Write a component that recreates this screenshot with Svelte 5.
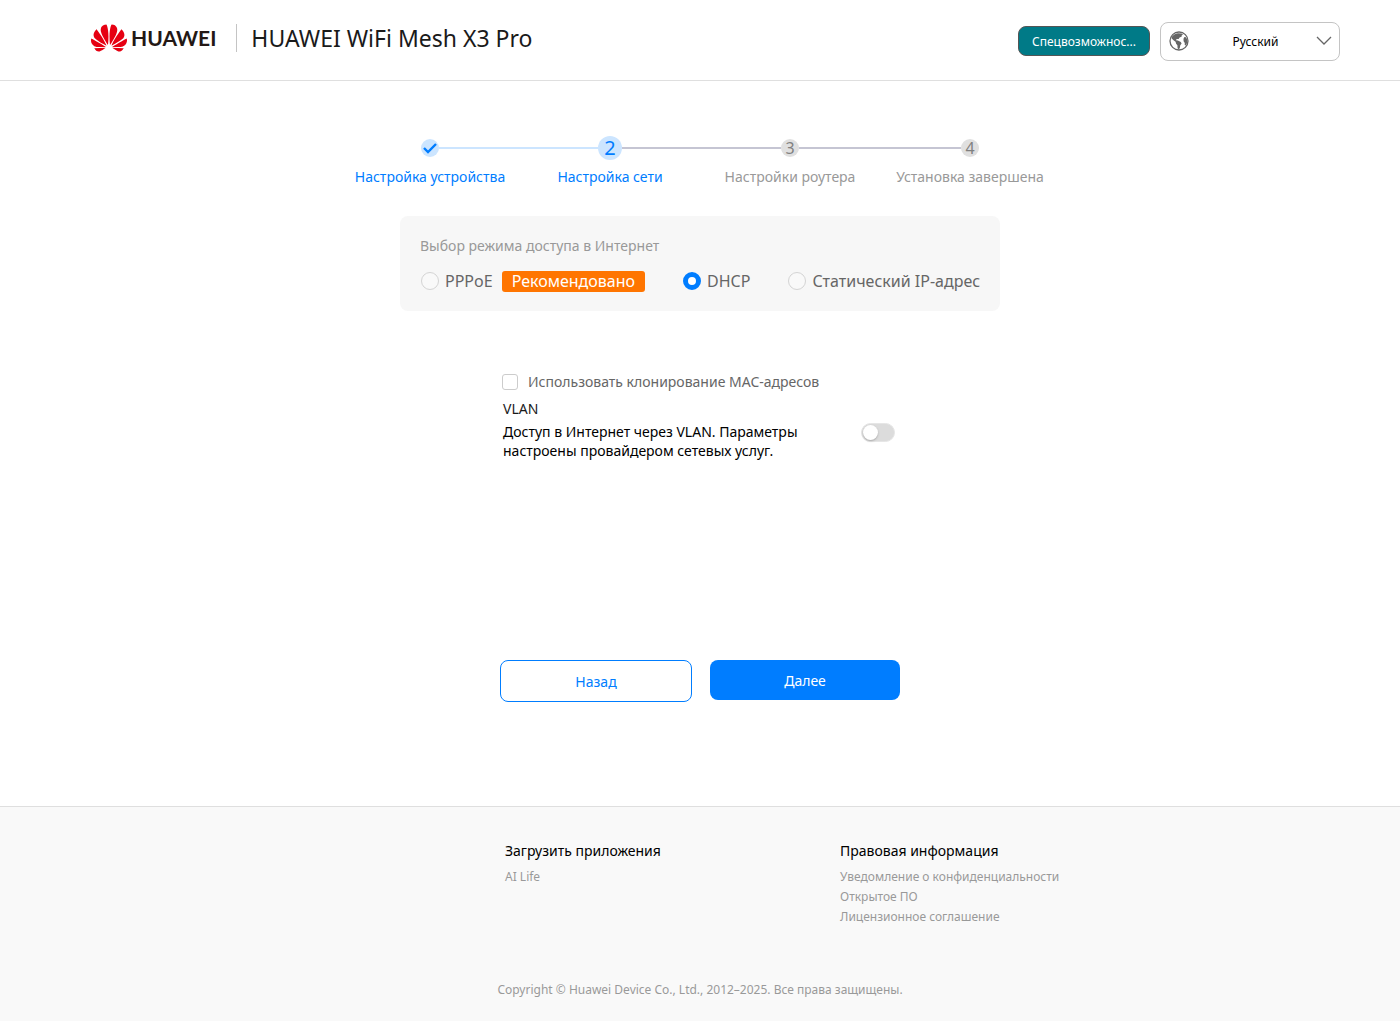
<script>
	let mode = 'dhcp';
	let cloneMac = false;
	let vlan = false;
	let language = 'ru';

	const currentStep = 2;

	const steps = ['Настройка устройства', 'Настройка сети', 'Настройки роутера', 'Установка завершена'];

	const modes = [
		{ id: 'pppoe', title: 'PPPoE', badge: 'Рекомендовано' },
		{ id: 'dhcp', title: 'DHCP' },
		{ id: 'static', title: 'Статический IP-адрес' }
	];

	const footerColumns = [
		{ title: 'Загрузить приложения', links: ['AI Life'] },
		{
			title: 'Правовая информация',
			links: ['Уведомление о конфиденциальности', 'Открытое ПО', 'Лицензионное соглашение']
		}
	];
</script>

<div class="page">
	<header class="header">
		<div class="identity">
			<a class="brand" href="/">
				<svg class="brand-icon" viewBox="0 2.9 24 18.2" aria-hidden="true">
					<path
						d="M3.67 6.14S1.82 7.91 1.72 9.78v.35c.08 1.51 1.22 2.4 1.22 2.4 1.83 1.79 6.26 4.04 7.3 4.55 0 0 .06.03.1-.01l.02-.04v-.04C7.52 10.8 3.67 6.14 3.67 6.14zM9.65 18.6c-.02-.08-.1-.08-.1-.08l-7.38.26c.8 1.43 2.15 2.53 3.56 2.2.96-.25 3.16-1.78 3.88-2.3.06-.05.04-.09.04-.09zm.08-.78C6.49 15.63.21 12.28.21 12.28c-.15.46-.2.9-.21 1.3v.07c0 1.07.4 1.82.4 1.82.8 1.69 2.34 2.2 2.34 2.2.7.3 1.4.31 1.4.31.12.02 4.4 0 5.54 0 .05 0 .08-.05.08-.05v-.06c0-.03-.03-.05-.03-.05zM9.06 3.19a3.42 3.42 0 0 0-2.57 3.15v.41c.03.6.16 1.05.16 1.05.66 2.9 3.86 7.65 4.55 8.65.05.05.1.03.1.03a.1.1 0 0 0 .06-.1c1.06-10.6-1.11-13.42-1.11-13.42-.32.02-1.19.23-1.19.23zm8.3 2.27s-.49-1.8-2.44-2.28c0 0-.57-.14-1.17-.22 0 0-2.18 2.81-1.12 13.43.01.07.06.08.06.08.07.03.1-.03.1-.03.72-1.03 3.9-5.76 4.55-8.64 0 0 .36-1.4.02-2.34zm-2.92 13.07s-.07 0-.09.05c0 0-.01.07.03.1.7.51 2.85 2 3.88 2.3 0 0 .16.05.43.06h.14c.69-.02 1.9-.37 3-2.26l-7.4-.25zm7.83-8.41c.14-2.06-1.94-3.97-1.94-3.98 0 0-3.85 4.66-6.67 10.8 0 0-.03.08.02.13l.04.01h.06c1.06-.53 5.46-2.77 7.28-4.54 0 0 1.15-.93 1.21-2.42zm1.52 2.14s-6.28 3.37-9.52 5.55c0 0-.05.04-.03.11 0 0 .03.06.07.06 1.16 0 5.56 0 5.67-.02 0 0 .57-.02 1.27-.29 0 0 1.56-.5 2.37-2.27 0 0 .73-1.45.17-3.14z"
					/>
				</svg>
				<span class="brand-name">HUAWEI</span>
			</a>
			<h1 class="product">HUAWEI WiFi Mesh X3 Pro</h1>
		</div>

		<button class="accessibility" type="button">Спецвозможнос...</button>

		<div class="language">
			<svg class="globe" viewBox="0 0 20 20" aria-hidden="true">
				<circle cx="10" cy="10" r="9" fill="none" stroke="#666" stroke-width="1.3" />
				<path
					d="M2.2 7C3.4 4.2 6 2.6 9 2.2l3.6.3 1.4 1.1-1.4.8.2 1.2-2.2.9-1 1.6-2-.1-.6 1.2 1.8.2 3 1.5.8 1.5-1.3 1.9-.5 2.6-1 1.6-1.2-1.2-.2-3-1.3-1.6-.5-2-1.8-1.3z"
				/>
				<path d="M15.4 6l1.6.2 1 1.8.4 2-.5 2.6-1.3 2-.9-.8.1-1.8-1.2-1.8-.1-2.4z" />
			</svg>
			<select class="language-select" aria-label="Язык" bind:value={language}>
				<option value="ru">Русский</option>
				<option value="en">English</option>
			</select>
			<svg class="chevron" viewBox="0 0 16 10" aria-hidden="true">
				<path d="M1 1l7 7 7-7" />
			</svg>
		</div>
	</header>

	<main class="main">
		<ol class="steps">
			{#each steps as step, i}
				<li
					class="step"
					class:done={i + 1 < currentStep}
					class:current={i + 1 === currentStep}
				>
					<div class="step-track">
						<span class="step-dot">
							{#if i + 1 < currentStep}
								<svg class="check" viewBox="0 0 14 12" aria-hidden="true">
									<path d="M1 6l4 4 8-8" />
								</svg>
							{:else}
								{i + 1}
							{/if}
						</span>
					</div>
					<span class="step-title">{step}</span>
				</li>
			{/each}
		</ol>

		<fieldset class="modes">
			<legend class="modes-title">Выбор режима доступа в Интернет</legend>
			<div class="modes-row">
				{#each modes as item}
					<label class="mode">
						<input class="radio" type="radio" name="mode" value={item.id} bind:group={mode} />
						<span>{item.title}</span>
						{#if item.badge}
							<span class="badge">{item.badge}</span>
						{/if}
					</label>
				{/each}
			</div>
		</fieldset>

		<form class="form" on:submit|preventDefault>
			<div class="options">
				<label class="clone">
					<input class="checkbox" type="checkbox" bind:checked={cloneMac} />
					<span>Использовать клонирование MAC-адресов</span>
				</label>
				<label class="vlan">
					<span class="vlan-text">
						<span class="vlan-title">VLAN</span>
						<span>Доступ в Интернет через VLAN. Параметры настроены провайдером сетевых услуг.</span>
					</span>
					<input class="switch" type="checkbox" role="switch" bind:checked={vlan} />
				</label>
			</div>

			<div class="actions">
				<button class="button back" type="button">Назад</button>
				<button class="button next" type="submit">Далее</button>
			</div>
		</form>
	</main>

	<footer class="footer">
		<div class="footer-columns">
			{#each footerColumns as column}
				<section>
					<h2 class="footer-title">{column.title}</h2>
					{#each column.links as link}
						<a class="footer-link" href="/">{link}</a>
					{/each}
				</section>
			{/each}
		</div>
		<p class="copyright">Copyright © Huawei Device Co., Ltd., 2012–2025. Все права защищены.</p>
	</footer>
</div>

<style>
	:global(body) {
		margin: 0;
		background: #fff;
	}

	.page {
		display: flex;
		flex-direction: column;
		min-height: 100vh;
		font-family: 'Segoe UI', 'Noto Sans', 'Open Sans', sans-serif;
		font-size: 14px;
		line-height: 20px;
		color: #000;
	}

	.page * {
		box-sizing: border-box;
	}

	button,
	select {
		font-family: inherit;
		cursor: pointer;
	}

	/* Header */

	.header {
		display: flex;
		align-items: center;
		height: 81px;
		padding: 2px 60px 0 91px;
		border-bottom: 1px solid #dfdfdf;
	}

	.identity {
		display: flex;
		align-items: center;
		margin-right: auto;
		padding-bottom: 6px;
	}

	.brand {
		display: flex;
		align-items: center;
		gap: 4px;
		padding-right: 20px;
		border-right: 1px solid #c4c4c4;
		color: #231815;
		text-decoration: none;
	}

	.brand-icon {
		width: 36px;
		height: 28px;
		fill: #e60012;
	}

	.brand-name {
		font-family: Lato, sans-serif;
		font-size: 21px;
		font-weight: 700;
		line-height: 28px;
	}

	.product {
		margin: 0 0 0 14px;
		font-size: 23px;
		font-weight: 400;
		line-height: 32px;
		color: #1a1a1a;
	}

	.accessibility {
		width: 132px;
		height: 30px;
		margin-right: 10px;
		padding: 0 10px;
		border: 1px solid #555;
		border-radius: 8px;
		background: #007a87;
		color: #fff;
		font-size: 12px;
	}

	.language {
		display: flex;
		align-items: center;
		width: 180px;
		height: 39px;
		padding: 0 7px 0 8px;
		border: 1px solid #c4c4c4;
		border-radius: 8px;
	}

	.globe {
		width: 20px;
		height: 20px;
		fill: #666;
	}

	.language-select {
		flex: 1;
		height: 37px;
		padding: 0 0 0 6px;
		border: 0;
		background: none;
		appearance: none;
		color: #000;
		font-size: 12px;
		text-align: center;
		text-align-last: center;
	}

	.chevron {
		width: 16px;
		height: 10px;
		fill: none;
		stroke: #666;
		stroke-width: 1.3;
	}

	/* Steps */

	.main {
		display: flex;
		flex: 1;
		flex-direction: column;
		align-items: center;
		padding-top: 55px;
	}

	.steps {
		display: flex;
		width: 720px;
		margin: 0;
		padding: 0;
		list-style: none;
	}

	.step {
		flex: 1;
		text-align: center;
		color: #999;
	}

	.step-track {
		display: flex;
		align-items: center;
		height: 24px;
		margin-bottom: 7px;
	}

	.step-track::before,
	.step-track::after {
		content: '';
		flex: 1;
		height: 2px;
		background: #c5c5d3;
	}

	.step:first-child .step-track::before,
	.step:last-child .step-track::after {
		background: none;
	}

	.step-dot {
		display: flex;
		align-items: center;
		justify-content: center;
		width: 18px;
		height: 18px;
		border-radius: 50%;
		background: #e0e0e0;
		color: #808080;
		font-size: 16px;
	}

	.done,
	.current {
		color: #007dff;
	}

	.done .step-track::after,
	.current .step-track::before,
	.done .step-dot,
	.current .step-dot {
		background: #cce5ff;
	}

	.current .step-dot {
		width: 24px;
		height: 24px;
		color: #007dff;
		font-size: 20px;
	}

	.check {
		width: 14px;
		height: 12px;
		fill: none;
		stroke: #007dff;
		stroke-width: 2.4;
	}

	/* Access mode */

	.modes {
		width: 600px;
		min-height: 95px;
		margin: 29px 0 0;
		padding: 20px 15px 0 20px;
		border: 0;
		border-radius: 8px;
		background: #f7f7f7;
	}

	.modes-title {
		float: left;
		padding: 0;
		color: #999;
	}

	.modes-row {
		display: flex;
		gap: 37px;
		clear: both;
		padding-top: 13px;
	}

	.mode {
		display: flex;
		align-items: center;
		font-size: 16px;
		line-height: 24px;
		color: #666;
	}

	.radio,
	.checkbox,
	.switch {
		flex: none;
		appearance: none;
		margin: 0;
		border: 1px solid #ccc;
		background: #fff;
	}

	.radio {
		width: 18px;
		height: 18px;
		margin: 0 6px 0 1px;
		border-color: #d4d4d4;
		border-radius: 50%;
		background: #f9f9f9;
	}

	.radio:checked {
		border: 5px solid #007dff;
		background: #fff;
	}

	.badge {
		margin-left: 9px;
		padding: 0 10px;
		border-radius: 3px;
		background: #ff7500;
		color: #fff;
		line-height: 21px;
	}

	/* Options */

	.form {
		width: 400px;
	}

	.options {
		min-height: 288px;
		margin: 61px 0 0;
		padding: 0 5px 0 2px;
	}

	.clone {
		display: flex;
		align-items: center;
		gap: 10px;
		color: #666;
	}

	.checkbox {
		width: 16px;
		height: 16px;
		border-radius: 3px;
	}

	.checkbox:checked {
		background: #007dff;
	}

	.vlan {
		display: flex;
		align-items: flex-end;
		justify-content: space-between;
		margin-top: 7px;
		padding-left: 1px;
	}

	.vlan-text {
		display: flex;
		flex-direction: column;
		gap: 3px;
		width: 320px;
		line-height: 19px;
	}

	.vlan-title {
		line-height: 20px;
		color: #1a1a1a;
	}

	.switch {
		width: 34px;
		height: 19px;
		margin-bottom: 18px;
		border: 1px solid #e6e6e6;
		border-radius: 10px;
		background: #dcdcdc;
	}

	.switch::before {
		content: '';
		display: block;
		width: 15px;
		height: 15px;
		margin: 1px;
		border-radius: 50%;
		background: #fff;
		box-shadow: 0 1px 2px #aaa;
	}

	.switch:checked {
		background: #007dff;
	}

	.switch:checked::before {
		margin-left: 16px;
	}

	.actions {
		display: flex;
		align-items: flex-start;
		gap: 18px;
	}

	.button {
		border: 0;
		border-radius: 8px;
		font-size: 14px;
	}

	.back {
		width: 192px;
		height: 42px;
		border: 1px solid #007dff;
		background: #fff;
		color: #007dff;
	}

	.next {
		width: 190px;
		height: 40px;
		background: #007dff;
		color: #fff;
	}

	/* Footer */

	.footer {
		min-height: 215px;
		padding-top: 34px;
		border-top: 1px solid #dfdfdf;
		background: #f9f9f9;
	}

	.footer-columns {
		display: grid;
		grid-template-columns: 335px max-content;
		min-height: 139px;
		padding-left: calc(50% - 195px);
	}

	.footer-title {
		margin: 0 0 6px;
		font-size: 14px;
		font-weight: 400;
		line-height: 20px;
	}

	.footer-link {
		display: block;
		font-size: 12px;
		line-height: 20px;
		color: #999;
		text-decoration: none;
	}

	.copyright {
		margin: 0;
		font-size: 12px;
		text-align: center;
		color: #999;
	}
</style>
